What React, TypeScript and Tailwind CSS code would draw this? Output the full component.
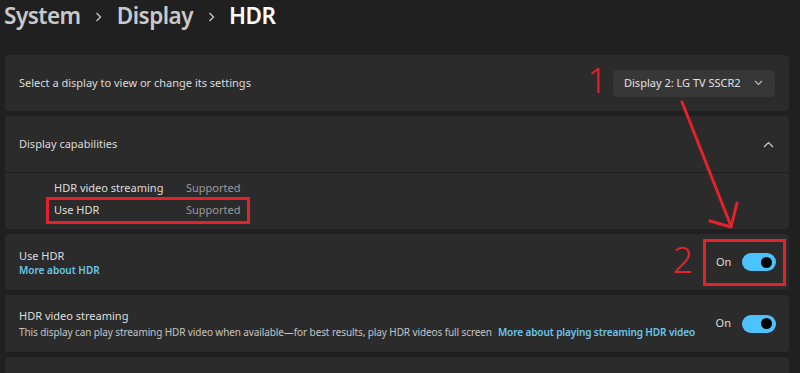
import React from "react";

const RED = "#e3222b";

function Toggle() {
  return (
    <div className="relative w-[34px] h-[18px] rounded-full bg-[#4cc2ff]">
      <span className="absolute right-[4px] top-[3.5px] w-[11px] h-[11px] rounded-full bg-black" />
    </div>
  );
}

function Crumb() {
  return (
    <svg width="7" height="10" viewBox="0 0 7 10" className="mx-[14.5px] mt-[1px]">
      <path d="M1.5 1 L5.5 5 L1.5 9" stroke="#c8c8c8" strokeWidth="1.3" fill="none" />
    </svg>
  );
}

export default function App() {
  return (
    <div
      className="relative w-[800px] h-[373px] overflow-hidden bg-[#202020] text-[#e6e6e6]"
      style={{ fontFamily: "'Noto Sans', 'Open Sans', sans-serif" }}
    >
      {/* Breadcrumb title */}
      <div className="h-[55px] flex items-start pl-[4px] pt-[2px]">
        <div className="flex items-center text-[22.5px] tracking-[-0.5px] font-semibold leading-[28px]">
          <span className="text-[#c9c9c9]">System</span>
          <Crumb />
          <span className="text-[#c9c9c9]">Display</span>
          <Crumb />
          <span className="text-white">HDR</span>
        </div>
      </div>

      <div className="flex flex-col gap-[5px] pl-[5px] pr-[11px]">
        {/* Select display */}
        <div className="h-[56px] rounded-[4px] bg-[#2b2b2b] flex items-center justify-between pl-[14px] pr-[14px]">
          <span className="text-[11px] text-[#dcdcdc]">Select a display to view or change its settings</span>
          <div className="flex items-center gap-[6px]">
            <span className="text-[34px] font-light leading-none mt-[-6px]" style={{ color: RED }}>1</span>
            <div className="w-[162px] h-[27px] rounded-[4px] bg-[#373737] flex items-center justify-between pl-[11px] pr-[12px]">
              <span className="text-[11px] text-[#e2e2e2]">Display 2: LG TV SSCR2</span>
              <svg width="9" height="6" viewBox="0 0 9 6">
                <path d="M1 1 L4.5 4.5 L8 1" stroke="#bdbdbd" strokeWidth="1.1" fill="none" />
              </svg>
            </div>
          </div>
        </div>

        {/* Display capabilities */}
        <div className="rounded-[4px] bg-[#2b2b2b] flex flex-col">
          <div className="h-[57px] flex items-center justify-between pl-[14px] pr-[15px] border-b border-[#1e1e1e]">
            <span className="text-[11px] text-[#dcdcdc]">Display capabilities</span>
            <svg width="11" height="7" viewBox="0 0 11 7">
              <path d="M1 6 L5.5 1.5 L10 6" stroke="#d0d0d0" strokeWidth="1.2" fill="none" />
            </svg>
          </div>
          <div className="h-[56px] pt-[6px] pl-[41px] flex flex-col text-[11px]">
            <div className="h-[18px] w-[204px] px-[8px] flex items-center">
              <span className="w-[132px] shrink-0 text-[#dedede]">HDR video streaming</span>
              <span className="shrink-0 text-[#9a9a9a]">Supported</span>
            </div>
            <div className="h-[27px] w-[204px] px-[5px] flex items-center border-[3px]" style={{ borderColor: RED }}>
              <span className="w-[132px] shrink-0 text-[#dedede]">Use HDR</span>
              <span className="shrink-0 text-[#9a9a9a]">Supported</span>
            </div>
          </div>
        </div>

        {/* Use HDR */}
        <div className="h-[56px] rounded-[4px] bg-[#2b2b2b] flex items-center justify-between pl-[14px] pr-[3px]">
          <div className="flex flex-col leading-[15px] mt-[2px]">
            <span className="text-[11px] text-[#dedede]">Use HDR</span>
            <span className="text-[10px] font-semibold text-[#6cc6ec]">More about HDR</span>
          </div>
          <div className="flex items-center gap-[10px]">
            <span className="text-[36px] font-light leading-none mt-[-4px]" style={{ color: RED }}>2</span>
            <div className="h-[47px] w-[83px] border-[3px] flex items-center pl-[10px] pr-[7px] justify-between" style={{ borderColor: RED }}>
              <span className="text-[11px] text-[#dedede]">On</span>
              <Toggle />
            </div>
          </div>
        </div>

        {/* HDR video streaming */}
        <div className="h-[57px] rounded-[4px] bg-[#2b2b2b] flex items-center justify-between pl-[14px] pr-[13px]">
          <div className="flex flex-col leading-[16px]">
            <span className="text-[11px] text-[#dedede]">HDR video streaming</span>
            <span className="text-[10px] tracking-[-0.1px] text-[#c4c4c4] whitespace-nowrap">
              This display can play streaming HDR video when available—for best results, play HDR videos full screen
              <span className="ml-[6px] font-semibold text-[#6cc6ec]">More about playing streaming HDR video</span>
            </span>
          </div>
          <div className="flex items-center gap-[11px]">
            <span className="text-[11px] text-[#dedede]">On</span>
            <Toggle />
          </div>
        </div>

        {/* next card, cut off */}
        <div className="h-[40px] rounded-[4px] bg-[#2b2b2b]" />
      </div>

      {/* Annotation arrow */}
      <svg className="absolute inset-0 pointer-events-none" width="800" height="373">
        <path d="M682 102 L731 226" stroke={RED} strokeWidth="3" fill="none" strokeLinecap="round" />
        <path d="M710 221 L731 227 L737 203" stroke={RED} strokeWidth="3" fill="none" strokeLinecap="round" strokeLinejoin="round" />
      </svg>
    </div>
  );
}
